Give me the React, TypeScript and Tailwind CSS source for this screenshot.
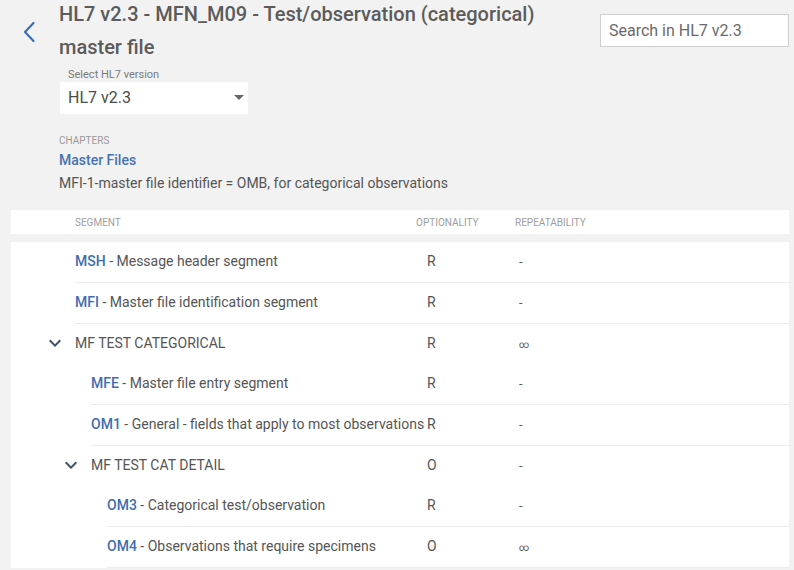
import React from "react";

type Row = {
  kind: "seg" | "group";
  code?: string;
  desc: string;
  opt: string;
  rep: string;
  ml: string;
};

const rows: Row[] = [
  { kind: "seg", code: "MSH", desc: "Message header segment", opt: "R", rep: "-", ml: "ml-[64px]" },
  { kind: "seg", code: "MFI", desc: "Master file identification segment", opt: "R", rep: "-", ml: "ml-[64px]" },
  { kind: "group", desc: "MF TEST CATEGORICAL", opt: "R", rep: "∞", ml: "ml-[64px]" },
  { kind: "seg", code: "MFE", desc: "Master file entry segment", opt: "R", rep: "-", ml: "ml-[80px]" },
  { kind: "seg", code: "OM1", desc: "General - fields that apply to most observations", opt: "R", rep: "-", ml: "ml-[80px]" },
  { kind: "group", desc: "MF TEST CAT DETAIL", opt: "O", rep: "-", ml: "ml-[80px]" },
  { kind: "seg", code: "OM3", desc: "Categorical test/observation", opt: "R", rep: "-", ml: "ml-[96px]" },
  { kind: "seg", code: "OM4", desc: "Observations that require specimens", opt: "O", rep: "∞", ml: "ml-[96px]" },
];

function BackChevron() {
  return (
    <svg width="14" height="22" viewBox="0 0 14 22" className="block">
      <path d="M11.5 2 L3 11 L11.5 20" fill="none" stroke="#3a6fb7" strokeWidth="2.2" strokeLinecap="round" strokeLinejoin="round" />
    </svg>
  );
}

function ExpandMore() {
  return (
    <svg width="24" height="24" viewBox="0 0 24 24" className="block">
      <path d="M7.41 8.59L12 13.17l4.59-4.58L18 10l-6 6-6-6 1.41-1.41z" fill="#41536b" />
    </svg>
  );
}

export default function App() {
  return (
    <div className="min-h-screen w-full bg-[#f2f2f2] [font-family:Roboto,sans-serif] text-[#5a5a5a] overflow-hidden">
      {/* Header */}
      <div className="flex items-start">
        <div className="flex h-[64px] w-[59px] items-center pl-[22px]">
          <BackChevron />
        </div>
        <h1 className="-mt-[2px] text-[20px] font-medium leading-[33px] text-[#5b5b5b]">
          HL7 v2.3 - MFN_M09 - Test/observation (categorical)
          <br />
          master file
        </h1>
        <div className="ml-auto mr-[5px] mt-[14px] flex h-[33px] w-[189px] items-center border border-[#cfcfcf] bg-white pl-[8px] text-[16px] text-[#6a6a6a]">
          Search in HL7 v2.3
        </div>
      </div>

      {/* Select */}
      <div className="ml-[60px] mt-[3px]">
        <div className="pl-[8px] text-[11px] leading-[15px] text-[#7a7a7a]">Select HL7 version</div>
        <div className="relative flex h-[32px] w-[188px] items-center bg-white pl-[8px] text-[16px] text-[#4a4a4a]">
          HL7 v2.3
          <svg width="24" height="24" viewBox="0 0 24 24" className="absolute right-[-3px] top-[3px]">
            <path d="M7 10l5 5 5-5z" fill="#666" />
          </svg>
        </div>
      </div>

      {/* Chapters */}
      <div className="ml-[59px] mt-[21px]">
        <div className="text-[10px] uppercase leading-[12px] text-[#9a9a9a]">Chapters</div>
        <div className="mt-[2px] text-[14px] font-medium leading-[23px] text-[#4672b3]">Master Files</div>
        <div className="text-[14px] leading-[23px] text-[#555]">
          MFI-1-master file identifier = OMB, for categorical observations
        </div>
      </div>

      {/* Table header */}
      <div className="ml-[11px] mr-[5px] mt-[15px] flex h-[24px] items-center bg-white text-[10px] uppercase text-[#9e9e9e]">
        <div className="ml-[64px] flex-1">Segment</div>
        <div className="w-[99px]">Optionality</div>
        <div className="w-[274px]">Repeatability</div>
      </div>

      {/* Table body */}
      <div className="ml-[11px] mr-[5px] mt-[8px] bg-white text-[14px] text-[#555]">
        {rows.map((r, i) => (
          <div
            key={i}
            className={
              r.kind === "seg"
                ? `${r.ml} flex h-[41px] items-center border-b border-[#ececec] pb-[2px]`
                : `${r.ml} flex h-[40px] items-center pb-[2px]`
            }
          >
            <div className="flex min-w-0 flex-1 items-center whitespace-nowrap">
              {r.kind === "group" ? (
                <>
                  <span className="-ml-[32px] mr-[8px] block">
                    <ExpandMore />
                  </span>
                  <span>{r.desc}</span>
                </>
              ) : (
                <span>
                  <span className="font-medium text-[#3f6db0]">{r.code}</span> - {r.desc}
                </span>
              )}
            </div>
            <div className="w-[99px] pl-[11px]">{r.opt}</div>
            <div className="w-[274px] pl-[4px]">
              {r.rep === "∞" ? <span className="text-[10px] leading-none">∞</span> : <span className="text-[13px]">-</span>}
            </div>
          </div>
        ))}
      </div>
    </div>
  );
}
